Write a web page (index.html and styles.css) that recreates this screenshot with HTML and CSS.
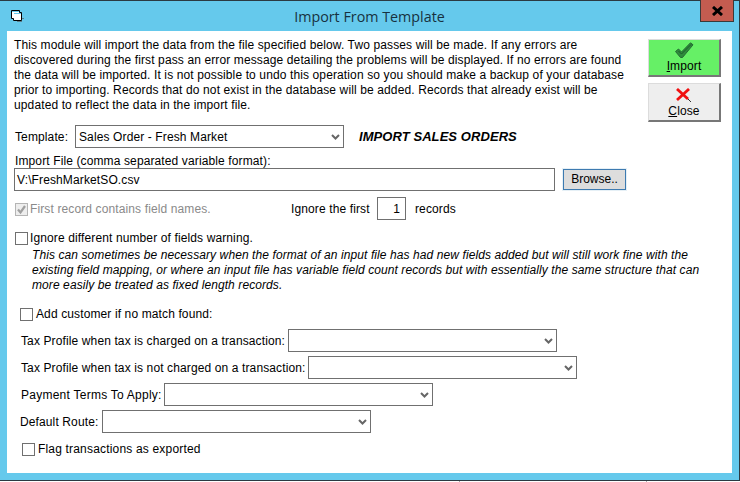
FILE: index.html
```html
<!DOCTYPE html>
<html lang="en">
<head>
<meta charset="utf-8">
<title>Import From Template</title>
<link rel="stylesheet" href="styles.css">
</head>
<body>
<div class="window">
  <header class="titlebar">
    <svg class="app-icon" width="14" height="12" viewBox="0 0 14 12"><path d="M.5.500h8v2h2v8h-8v-2h-2z" fill="#fff" stroke="#000"/><path d="M1 1.500h7M3 3.500h7" stroke="#65c9ec"/><path d="M11 8h2v1h-2zM6 11h5v1H6z" fill="#5d7f8c"/></svg>
    <h1 class="title">Import From Template</h1>
    <button class="win-close" type="button"><svg width="13" height="10" viewBox="0 0 13 10"><path d="M2 1l9 8M11 1l-9 8" stroke="#000" stroke-width="3"/></svg></button>
  </header>
  <main class="client">
    <section class="top">
      <p class="intro">This module will import the data from the file specified below. Two passes will be made. If any errors are<br>discovered during the first pass an error message detailing the problems will be displayed. If no errors are found<br>the data will be imported. It is not possible to undo this operation so you should make a backup of your database<br>prior to importing. Records that do not exist in the database will be added. Records that already exist will be<br>updated to reflect the data in the import file.</p>
      <div class="actions">
        <button class="action import" type="button">
          <svg width="20" height="17" viewBox="0 0 20 17"><path d="M1.500 9.500l3-2.500 3 3L16.500.800l2.500 2L8.500 15.500h-2z" fill="#2e8b3c" stroke="#256b33"/><path d="M4.500 9l3 3L17 2.500" fill="none" stroke="#1c5a2b"/></svg>
          <span><u>I</u>mport</span>
        </button>
        <button class="action close" type="button">
          <svg width="16" height="14" viewBox="0 0 16 14"><path d="M9 8l6 6" stroke="#333"/><path d="M1 1l11 10M13 1L1 12" stroke="#f01010" stroke-width="2.800"/></svg>
          <span><u>C</u>lose</span>
        </button>
      </div>
    </section>
    <div class="row template-row">
      <label class="template-label">Template:</label>
      <div class="select s269"><span>Sales Order - Fresh Market</span><svg class="chev" width="9" height="6" viewBox="0 0 9 6"><path d="M1 1l3.500 3.500L8 1" fill="none" stroke="#666" stroke-width="2"/></svg></div>
      <strong class="heading">IMPORT SALES ORDERS</strong>
    </div>
    <label class="file-label">Import File (comma separated variable format):</label>
    <div class="row file-row">
      <div class="input file-input">V:\FreshMarketSO.csv</div>
      <button class="browse" type="button">Browse..</button>
    </div>
    <div class="row first-row">
      <span class="check-wrap disabled">
        <svg class="box" width="13" height="13" viewBox="0 0 13 13"><rect x=".5" y=".5" width="12" height="12" fill="#eee" stroke="#b5b5b5"/><path d="M3 6.500l2.500 3L10 3" fill="none" stroke="#a0a0a0" stroke-width="2.200"/></svg>
        <span>First record contains field names.</span>
      </span>
      <span class="skip">Ignore the first</span>
      <div class="input num">1</div>
      <span class="records">records</span>
    </div>
    <div class="check-wrap warn-check"><span class="box empty"></span><span>Ignore different number of fields warning.</span></div>
    <p class="note">This can sometimes be necessary when the format of an input file has had new fields added but will still work fine with the<br>existing field mapping, or where an input file has variable field count records but with essentially the same structure that can<br>more easily be treated as fixed length records.</p>
    <div class="check-wrap add-check"><span class="box empty"></span><span>Add customer if no match found:</span></div>
    <div class="row field f1"><label>Tax Profile when tax is charged on a transaction:</label><div class="select s269"><span></span><svg class="chev" width="9" height="6" viewBox="0 0 9 6"><path d="M1 1l3.500 3.500L8 1" fill="none" stroke="#666" stroke-width="2"/></svg></div></div>
    <div class="row field f2"><label>Tax Profile when tax is not charged on a transaction:</label><div class="select s269"><span></span><svg class="chev" width="9" height="6" viewBox="0 0 9 6"><path d="M1 1l3.500 3.500L8 1" fill="none" stroke="#666" stroke-width="2"/></svg></div></div>
    <div class="row field pay"><label>Payment Terms To Apply:</label><div class="select s269"><span></span><svg class="chev" width="9" height="6" viewBox="0 0 9 6"><path d="M1 1l3.500 3.500L8 1" fill="none" stroke="#666" stroke-width="2"/></svg></div></div>
    <div class="row field route"><label>Default Route:</label><div class="select s269"><span></span><svg class="chev" width="9" height="6" viewBox="0 0 9 6"><path d="M1 1l3.500 3.500L8 1" fill="none" stroke="#666" stroke-width="2"/></svg></div></div>
    <div class="check-wrap flag-check"><span class="box empty"></span><span>Flag transactions as exported</span></div>
  </main>
</div>
<div class="under"><span></span><span></span></div>
</body>
</html>
```
FILE: styles.css
```css
* { box-sizing: border-box; }
html, body { margin: 0; padding: 0; background: #fff; }
body { width: 740px; height: 482px; overflow: hidden; font: 12px/15px "Liberation Sans", Arial, sans-serif; letter-spacing: .12px; color: #000; }
p { margin: 0; }
.window { width: 740px; height: 481px; background: #65c9ec; border: 1px solid #2b3a42; border-left: 0; padding: 0 7px 7px 7px; display: flex; flex-direction: column; }
.under { height: 1px; display: flex; }
.under span { width: 1px; height: 1px; background: #a8a8a8; margin-left: 186px; }
.under span:first-child { margin-left: 459px; }
.titlebar { height: 30px; flex: none; display: flex; align-items: center; position: relative; }
.app-icon { margin-left: 4px; margin-top: -1px; flex: none; }
.title { flex: 1; margin: 2px 0 0; text-align: center; font: 400 14.3px/20px "Open Sans", sans-serif; letter-spacing: 0; color: #17313f; padding-right: 18px; }
.win-close { position: absolute; top: -1px; right: -2px; width: 34px; height: 22px; background: #c45c50; border: 1px solid #3a3a3a; border-top: 0; padding: 0; display: flex; align-items: center; justify-content: center; }
.client { flex: 1; background: #fff; display: flex; flex-direction: column; }
.top { display: flex; height: 94px; }
.intro { width: 634px; padding: 7px 0 0 7px; white-space: nowrap; }
.actions { display: flex; flex-direction: column; gap: 6px; padding: 8px 0 0 7px; }
.action { width: 73px; height: 38px; padding: 0; border: 1px solid #dcdcdc; border-right: 2px solid #777; border-bottom: 2px solid #777; display: flex; flex-direction: column; align-items: center; font: 12px/14px "Liberation Sans", sans-serif; letter-spacing: inherit; color: #000; }
.action svg { margin-top: 2px; flex: none; }
.import { background: #66f066; }
.close { background: #eeeeee; height: 39px; }
.close svg { margin: 4px 0 2px; }
.row { display: flex; align-items: center; }
.template-row { height: 23px; margin-left: 8px; }
.template-label { width: 60px; padding-top: 1px; }
.select { display: flex; align-items: center; justify-content: space-between; height: 23px; border: 1px solid #707070; padding: 1px 3px 0 3px; background: #fff; flex: none; }
.s269 { width: 269px; }
.chev { flex: none; }
.heading { margin-left: 15px; font: italic 700 13px/16px "Liberation Sans", sans-serif; letter-spacing: .07px; }
.file-label { display: block; margin: 6px 0 0 8px; height: 14px; }
.file-row { margin: 0 0 0 7px; height: 23px; }
.input { border: 1px solid #707070; height: 23px; background: #fff; display: flex; align-items: center; padding-top: 1px; }
.file-input { width: 541px; padding-left: 2px; }
.browse { margin-left: 8px; width: 63px; height: 21px; padding: 0; background: #dddddd; border: 1px solid #3d7ab0; outline: 1px solid #e6f0f6; font: 12px/15px "Liberation Sans", sans-serif; letter-spacing: 0; color: #000; }
.first-row { margin: 6px 0 0 8px; height: 23px; padding-top: 1px; }
.first-row .input { margin-top: -1px; }
.check-wrap { display: flex; align-items: center; gap: 2px; }
.disabled { color: #8a8a8a; width: 276px; }
.box { flex: none; }
.box.empty { width: 13px; height: 13px; border: 1px solid #707070; background: #fff; }
.skip { width: 86px; }
.num { width: 29px; justify-content: flex-end; padding-right: 5px; }
.records { margin-left: 9px; }
.warn-check { margin: 11px 0 0 8px; height: 15px; }
.note { margin: 2px 0 0 25px; width: 690px; font-style: italic; white-space: nowrap; letter-spacing: .09px; }
.add-check { margin: 14px 0 0 13px; height: 15px; gap: 3px; }
.field { margin: 4px 0 0 14px; height: 23px; gap: 4px; }
.field label { padding-top: 1px; }
.f1 { margin-top: 7px; gap: 3px; }
.f2 { gap: 2px; }
.pay { gap: 2px; }
.pay label { letter-spacing: .25px; }
.route { margin-left: 13px; }
.flag-check { margin: 9px 0 0 15px; height: 15px; gap: 3px; letter-spacing: .18px; }
```
